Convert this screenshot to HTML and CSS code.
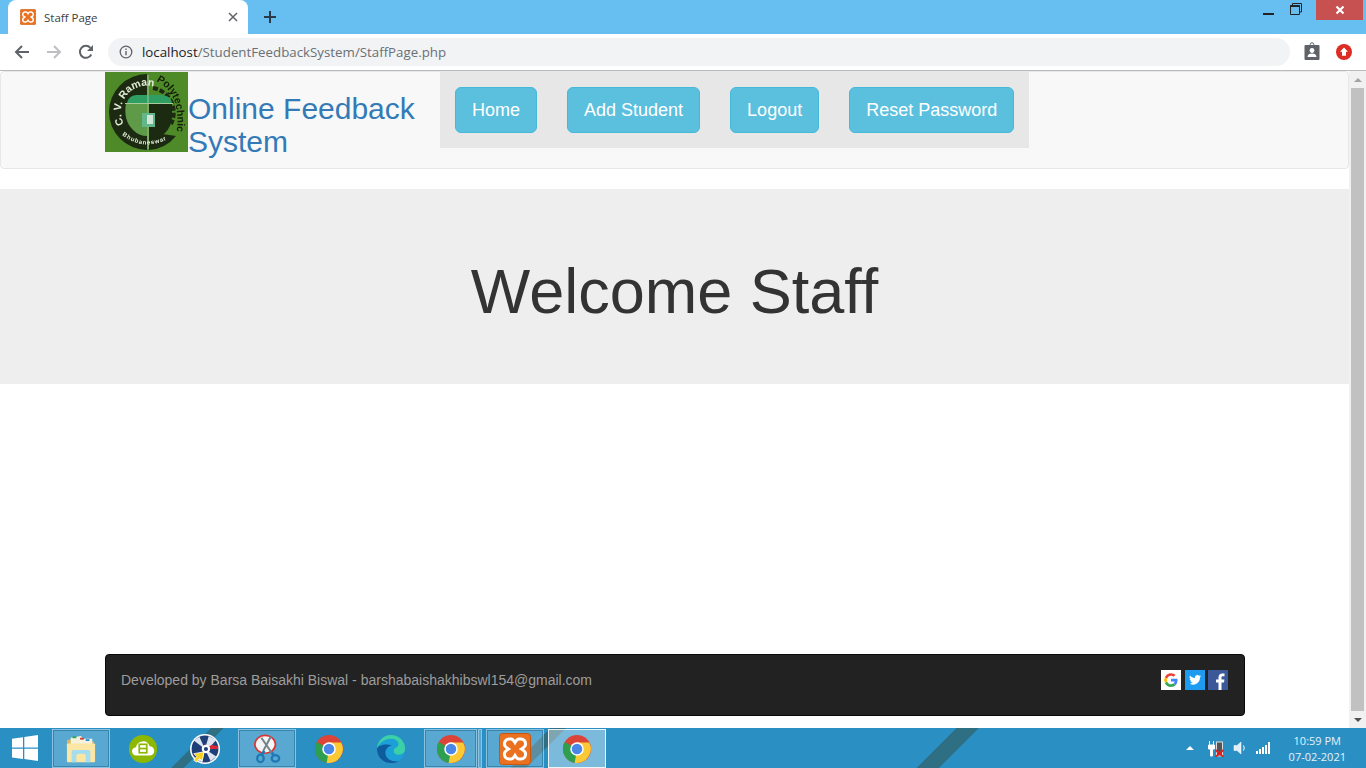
FILE: index.html
```html
<!DOCTYPE html>
<html lang="en">
<head>
<meta charset="utf-8">
<title>Staff Page</title>
<link rel="stylesheet" href="styles.css">
</head>
<body>
<svg class="defs" width="0" height="0">
  <symbol id="chrome" viewBox="0 0 32 32">
    <circle cx="16" cy="16" r="15" fill="#db4437"/>
    <path d="M16 16L3 8.500A15 15 0 0 0 13.500 30.800z" fill="#2e9e4f"/>
    <path d="M16 9H29A15 15 0 0 1 13.500 30.800L16 16z" fill="#fbc934"/>
    <circle cx="16" cy="16" r="7.200" fill="#fff"/>
    <circle cx="16" cy="16" r="5.600" fill="#4a86e8"/>
  </symbol>
  <symbol id="xampp" viewBox="0 0 32 32">
    <rect x=".5" y=".5" width="31" height="31" rx="3" fill="#ea7120" stroke="#c9560f"/>
    <path d="M10 6h2q2 0 4 3.500q2-3.500 4-3.500h2a4.500 4.500 0 0 1 4.500 4.500v1q0 2-4 4.500q4 2.500 4 4.500v1a4.500 4.500 0 0 1-4.500 4.500h-2q-2 0-4-3.500q-2 3.500-4 3.500h-2a4.500 4.500 0 0 1-4.500-4.500v-1q0-2 4-4.500q-4-2.500-4-4.500v-1a4.500 4.500 0 0 1 4.500-4.500z" fill="none" stroke="#fff" stroke-width="3"/>
  </symbol>
</svg>
<div class="tabstrip">
  <div class="tab">
    <svg class="favicon"><use href="#xampp"/></svg>
    <span class="tab-title">Staff Page</span>
    <svg class="tab-close" viewBox="0 0 10 10"><path d="M1 1l8 8M9 1l-8 8" stroke="#5f6368" stroke-width="1.500"/></svg>
  </div>
  <svg class="new-tab" viewBox="0 0 12 12"><path d="M6 0v12M0 6h12" stroke="#2b3a47" stroke-width="2"/></svg>
  <div class="window-controls">
    <svg class="win-min" viewBox="0 0 12 12"><path d="M0 9h11" stroke="#222" stroke-width="2"/></svg>
    <svg class="win-max" viewBox="0 0 12 12"><path d="M2.500 2.500V.5h9v8.500H9.500M.5 2.500h9v9h-9z" fill="none" stroke="#222" stroke-width="1"/><path d="M.5 3h9" stroke="#222" stroke-width="2"/></svg>
    <div class="win-close"><svg viewBox="0 0 10 10"><path d="M1.500 1.500l7 7M8.500 1.500l-7 7" stroke="#fff" stroke-width="2.200"/></svg></div>
  </div>
</div>
<div class="toolbar">
  <svg class="nav-icon" viewBox="0 0 16 16"><path d="M15 8H2M8 2L2 8l6 6" fill="none" stroke="#5f6368" stroke-width="2"/></svg>
  <svg class="nav-icon" viewBox="0 0 16 16"><path d="M1 8h13M8 2l6 6-6 6" fill="none" stroke="#bdbfc2" stroke-width="2"/></svg>
  <svg class="nav-icon" viewBox="0 0 16 16"><path d="M13.300 10.500A6 6 0 1 1 12.400 3.800" fill="none" stroke="#5f6368" stroke-width="2"/><path d="M15 1v6H9z" fill="#5f6368"/></svg>
  <div class="omnibox">
    <svg class="info" viewBox="0 0 14 14"><circle cx="7" cy="7" r="5.800" fill="none" stroke="#5f6368" stroke-width="1.300"/><path d="M7 6v4.200M7 3.600v1.400" stroke="#5f6368" stroke-width="1.400"/></svg>
    <span class="url"><span class="host">localhost</span>/StudentFeedbackSystem/StaffPage.php</span>
  </div>
  <svg class="ext-badge" viewBox="0 0 16 18"><path d="M1.500 2.500h13a1 1 0 0 1 1 1v13a1 1 0 0 1-1 1h-13a1 1 0 0 1-1-1v-13a1 1 0 0 1 1-1z" fill="#5f6368"/><circle cx="8" cy="2" r="1.800" fill="none" stroke="#5f6368"/><circle cx="8" cy="8" r="2.400" fill="#fff"/><path d="M3.500 14.500c0-2.500 2-3.500 4.500-3.500s4.500 1 4.500 3.500z" fill="#fff"/></svg>
  <svg class="ext-up" viewBox="0 0 16 16"><circle cx="8" cy="8" r="8" fill="#dc2c24"/><path d="M8 3.500l4 4.200H10v4H6v-4H4z" fill="#fff"/></svg>
</div>
<div class="viewport">
  <main class="page">
    <nav class="navbar">
      <div class="brand">
        <svg class="logo" viewBox="0 0 83 80">
          <rect width="83" height="80" fill="#4f8a28"/>
          <path d="M42 2A38 38 0 0 0 42 78z" fill="#1b2a10"/>
          <path d="M44 78A38 38 0 0 0 71 64L44 60z" fill="#1b2a10"/>
          <path d="M48 16A25 25 0 0 1 66 52" fill="none" stroke="#1b2a10" stroke-width="4" stroke-dasharray="5 2"/>
          <path d="M42 31H21Q18 48 28 58Q34 64 42 64z" fill="#5f9a48"/>
          <path d="M44 31H67V45A24 24 0 0 1 44 68z" fill="#1b2a10"/>
          <path d="M22 31Q24 23 32 23H58Q66 24 67 31z" fill="#2f9e63"/>
          <path d="M20 31.500H68" stroke="#a8c99a" stroke-width="1"/>
          <path d="M43 3V77" stroke="#a8c99a" stroke-width="1"/>
          <rect x="37" y="41" width="13" height="14" fill="#62b68a"/>
          <rect x="42" y="43" width="6" height="9" fill="#cfe6d8"/>
          <path id="logoArcLeft" d="M19 52A26 26 0 0 1 50 15" fill="none"/>
          <path id="logoArcRight" d="M51 9Q78 22 71 64" fill="none"/>
          <path id="logoArcBottom" d="M17 63Q42 82 69 63" fill="none"/>
          <text class="logo-text-light"><textPath href="#logoArcLeft">C. V. Raman</textPath></text>
          <text class="logo-text-dark"><textPath href="#logoArcRight">Polytechnic</textPath></text>
          <text class="logo-text-small"><textPath href="#logoArcBottom">Bhubaneswar</textPath></text>
        </svg>
        <a class="brand-title">Online Feedback System</a>
      </div>
      <div class="menu">
        <a class="btn">Home</a>
        <a class="btn">Add Student</a>
        <a class="btn">Logout</a>
        <a class="btn">Reset Password</a>
      </div>
    </nav>
    <section class="jumbotron"><h1>Welcome Staff</h1></section>
    <footer class="footer">
      <span class="footer-text">Developed by Barsa Baisakhi Biswal - barshabaishakhibswl154@gmail.com</span>
      <div class="social">
        <svg class="social-icon" viewBox="0 0 20 20"><rect width="20" height="20" fill="#fff"/><path d="M16.500 10.200c0-.5 0-1-.1-1.400H10v2.700h3.700c-.2.900-.7 1.600-1.400 2.100l2.200 1.700c1.300-1.200 2-3 2-5.100z" fill="#4285f4"/><path d="M10 17c1.900 0 3.400-.6 4.500-1.700l-2.200-1.700c-.6.400-1.400.7-2.300.7-1.800 0-3.300-1.200-3.800-2.900l-2.300 1.800C5 15.500 7.300 17 10 17z" fill="#34a853"/><path d="M6.200 11.400a4 4 0 0 1 0-2.700L3.900 6.900a7 7 0 0 0 0 6.300z" fill="#fbbc05"/><path d="M10 5.800c1 0 1.900.4 2.600 1l2-2A7 7 0 0 0 3.900 6.900l2.300 1.800C6.700 7 8.200 5.800 10 5.800z" fill="#ea4335"/></svg>
        <svg class="social-icon" viewBox="0 0 20 20"><rect width="20" height="20" fill="#1d9bf0"/><path d="M16 6.100c-.4.200-.9.300-1.400.4.500-.3.900-.8 1.100-1.400-.5.300-1 .5-1.600.6a2.500 2.500 0 0 0-4.200 2.300c-2-.1-3.800-1.100-5-2.600-.7 1.100-.3 2.600.8 3.300-.4 0-.8-.1-1.100-.3 0 1.200.8 2.200 2 2.500-.4.100-.7.100-1.100 0 .3 1 1.200 1.700 2.300 1.700-1 .8-2.300 1.200-3.600 1 1.100.7 2.400 1.100 3.800 1.100 4.600 0 7.100-3.800 7-7.200.4-.3.800-.8 1-1.400z" fill="#fff"/></svg>
        <svg class="social-icon" viewBox="0 0 20 20"><rect width="20" height="20" fill="#3b5998"/><path d="M13.500 20v-7.500H16l.4-3h-2.900V7.700c0-.9.300-1.400 1.500-1.400h1.500V3.600c-.3 0-1.200-.1-2.200-.1-2.200 0-3.800 1.300-3.800 3.800v2.200H8v3h2.500V20z" fill="#fff"/></svg>
      </div>
    </footer>
  </main>
  <div class="scrollbar">
    <div class="scroll-btn"><span class="arrow-up"></span></div>
    <div class="scroll-thumb"></div>
    <div class="scroll-btn"><span class="arrow-down"></span></div>
  </div>
</div>
<div class="taskbar">
  <svg class="start" viewBox="0 0 26 26"><path d="M0 3.700l11-1.500v10.300H0zM12.300 2L26 0v12.500H12.300zM0 13.800h11v10.300L0 22.500zM12.300 13.800H26V26l-13.700-2z" fill="#fff"/></svg>
  <div class="task active-soft">
    <svg class="task-icon" viewBox="0 0 32 32"><path d="M1 6h11l2 2h16v6H1z" fill="#d9b75c"/><path d="M5 4l11-2 2 3 10 0v6H5z" fill="#f6f1dc"/><rect x="7" y="2.500" width="4" height="2" fill="#2ba84a"/><rect x="15" y="4" width="4" height="2" fill="#d23a2e"/><rect x="21" y="5.500" width="4" height="2" fill="#2a8fd8"/><rect x="1" y="10" width="30" height="20" rx="1" fill="#fbe6a3"/><path d="M6 30V19q0-2 2-2h16q2 0 2 2v11h-5v-7q0-2-2-2h-6q-2 0-2 2v7z" fill="#a4dcf0"/></svg>
  </div>
  <div class="task">
    <svg class="task-icon" viewBox="0 0 32 32"><circle cx="16" cy="16" r="15" fill="#8db800"/><path d="M9 23a4.500 4.500 0 0 1-.5-9 7.500 7.500 0 0 1 14.500-1 5 5 0 0 1 0 10z" fill="#fff"/><rect x="12" y="11" width="8" height="9" fill="none" stroke="#8db800" stroke-width="1.800"/><path d="M12 15.500h8" stroke="#8db800" stroke-width="1.800"/></svg>
  </div>
  <div class="task">
    <svg class="task-icon" viewBox="0 0 32 32"><circle cx="16" cy="16" r="16" fill="#fff"/><circle cx="16" cy="16" r="14.300" fill="#1f3f78"/><path d="M16 10L30 13 30 16H20z" fill="#d8283a"/><path d="M16 16L20 2 28 6 24 11zM16 16L4 7 10 3zM16 16L22 29 28 24zM16 16L8 28 13 30z" fill="#dbe4ef"/><circle cx="17" cy="16" r="4.500" fill="#fff"/><circle cx="17" cy="16" r="2.200" fill="#1f3f78"/><path d="M15 19L4 21l3 3-3 4 3 2 3-4 3 3z" fill="#f7d21e" stroke="#fff" stroke-width=".8"/></svg>
  </div>
  <div class="task active-soft">
    <svg class="task-icon" viewBox="0 0 32 32"><ellipse cx="14" cy="11" rx="11" ry="9.500" fill="#f5f5f5" stroke="#d33" stroke-width="1.800"/><path d="M10 4l11 16M20 3l-8 15" stroke="#74848f" stroke-width="2.200"/><path d="M13 18l-3 5M21 20l2 2" stroke="#1f78b4" stroke-width="3"/><ellipse cx="9" cy="26" rx="3.500" ry="4" fill="none" stroke="#1f78b4" stroke-width="2.400"/><ellipse cx="25" cy="26" rx="4" ry="3.500" fill="none" stroke="#1f78b4" stroke-width="2.400"/></svg>
  </div>
  <div class="task"><svg class="task-icon"><use href="#chrome"/></svg></div>
  <div class="task">
    <svg class="task-icon" viewBox="0 0 32 32"><circle cx="16" cy="16" r="15" fill="#1d9fd8"/><path d="M16 1a15 15 0 0 1 15 15c0 3-2 6-7 6-4 0-5-2-5-4 0-4 5-3 5-7C24 7 20 5 16 5 9 5 3 10 1 15 2 7 8 1 16 1z" fill="#3bd0a5"/><path d="M1 16c0 8 6 15 15 15 4 0 6-1 8-2-8 1-14-3-14-9 0-4 3-7 7-8-7-2-15 0-16 4z" fill="#0f5c9c"/></svg>
  </div>
  <div class="task active-soft stacked"><svg class="task-icon"><use href="#chrome"/></svg></div>
  <div class="task active-soft stack-edge"></div>
  <div class="task active-soft"><svg class="task-icon xampp-icon"><use href="#xampp"/></svg></div>
  <div class="task active-strong"><svg class="task-icon"><use href="#chrome"/></svg></div>
  <div class="tray">
    <span class="tray-caret"></span>
    <svg class="tray-power" viewBox="0 0 16 18"><path d="M1 6h6v4H5v7H3v-7H1zM2 2v4M6 2v4" fill="#fff" stroke="#fff"/><rect x="9" y="3" width="6" height="14" fill="#555" stroke="#ddd"/><path d="M8 11l8 7M16 11l-8 7" stroke="#e02020" stroke-width="1.800"/></svg>
    <svg class="tray-sound" viewBox="0 0 14 14"><path d="M1 4.500h3L8 1v12L4 9.500H1z" fill="#dfeef7" stroke="#fff" stroke-width=".5"/><path d="M10.500 4.500q1.500 2.500 0 5" fill="none" stroke="#fff"/></svg>
    <svg class="tray-signal" viewBox="0 0 16 12"><path d="M1 9h2v3H1zM4 7h2v5H4zM7 5h2v7H7zM10 3h2v9h-2zM13 0h2v12h-2z" fill="#fff"/></svg>
    <div class="clock"><span>10:59 PM</span><span>07-02-2021</span></div>
  </div>
</div>
</body>
</html>
```
FILE: styles.css
```css
* { box-sizing: border-box; }
html, body { height: 100%; }
body {
  margin: 0;
  height: 768px;
  overflow: hidden;
  display: flex;
  flex-direction: column;
  font-family: "Liberation Sans", Arial, sans-serif;
  background: #fff;
}
.defs { display: block; height: 0; flex: none; }

/* Browser chrome */
.tabstrip {
  height: 34px;
  flex: none;
  background: #67bef1;
  display: flex;
  align-items: flex-end;
  padding-left: 8px;
}
.tab {
  width: 240px;
  height: 34px;
  background: #fff;
  border-radius: 8px 8px 0 0;
  display: flex;
  align-items: center;
  padding: 0 10px 0 12px;
}
.favicon { width: 16px; height: 16px; flex: none; }
.tab-title {
  margin-left: 8px;
  flex: 1;
  font-family: "Open Sans", sans-serif;
  font-size: 11.500px;
  color: #3c4043;
}
.tab-close { width: 10px; height: 10px; }
.new-tab { width: 12px; height: 12px; margin: 0 0 11px 16px; }
.window-controls {
  margin-left: auto;
  align-self: flex-start;
  display: flex;
  align-items: flex-start;
}
.win-min { width: 12px; height: 12px; margin: 5px 15px 0 0; }
.win-max { width: 12px; height: 12px; margin: 3px 14px 0 0; }
.win-close {
  width: 47px;
  height: 20px;
  margin-right: 3px;
  background: #c75050;
  display: flex;
  align-items: center;
  justify-content: center;
}
.win-close svg { width: 10px; height: 10px; }

.toolbar {
  height: 37px;
  flex: none;
  background: #fff;
  border-bottom: 1px solid #b8babc;
  display: flex;
  align-items: center;
  padding: 0 14px 1px 14px;
}
.nav-icon { width: 16px; height: 16px; margin-right: 16px; flex: none; }
.omnibox {
  width: 1182px;
  height: 28px;
  margin-left: -2px;
  border-radius: 14px;
  background: #f1f3f4;
  display: flex;
  align-items: center;
  padding-left: 11px;
}
.info { width: 14px; height: 14px; flex: none; }
.url {
  margin-left: 9px;
  font-family: "Open Sans", sans-serif;
  font-size: 13.300px;
  color: #6b7075;
  white-space: nowrap;
}
.host { color: #202124; }
.ext-badge { width: 16px; height: 19px; margin-left: 14px; flex: none; }
.ext-up { width: 16px; height: 16px; margin-left: 16px; flex: none; }

/* Page */
.viewport {
  height: 657px;
  flex: none;
  display: flex;
}
.page {
  flex: 1;
  display: flex;
  flex-direction: column;
  min-width: 0;
}
.navbar {
  height: 98px;
  flex: none;
  background: #f8f8f8;
  border: 1px solid #e7e7e7;
  border-radius: 4px;
  display: flex;
  align-items: flex-start;
  padding-left: 104px;
}
.brand { width: 335px; display: flex; flex: none; }
.logo { width: 83px; height: 80px; flex: none; filter: blur(.35px); }
.logo text { font-family: "Liberation Sans", Arial, sans-serif; font-weight: 700; }
.logo-text-light { font-size: 10.500px; fill: #e3ecd9; }
.logo-text-dark { font-size: 10.500px; fill: #14200c; }
.logo-text-small { font-size: 6px; letter-spacing: .8px; fill: #e6efe0; }
.brand-title {
  width: 240px;
  margin: 20px 0 0 0;
  font-size: 30px;
  line-height: 33px;
  color: #337ab7;
}
.menu {
  height: 76px;
  background: #e7e7e7;
  display: flex;
  gap: 30px;
  padding: 15px 15px 0;
}
.btn {
  height: 46px;
  padding: 0 16px;
  display: flex;
  align-items: center;
  background: #5bc0de;
  border: 1px solid #46b8da;
  border-radius: 6px;
  color: #fff;
  font-size: 18px;
  white-space: nowrap;
}
.jumbotron {
  height: 195px;
  flex: none;
  margin-top: 20px;
  padding-top: 10px;
  background: #eee;
  display: flex;
  align-items: center;
  justify-content: center;
}
.jumbotron h1 {
  margin: 0;
  font-size: 63px;
  font-weight: 500;
  line-height: 69px;
  color: #333;
}
.footer {
  width: 1140px;
  height: 62px;
  flex: none;
  margin: 270px 0 0 105px;
  background: #222;
  border: 1px solid #080808;
  border-radius: 4px;
  display: flex;
  justify-content: space-between;
  align-items: flex-start;
  padding: 15px 16px 0 15px;
}
.footer-text { font-size: 14px; line-height: 20px; color: #9d9d9d; }
.social { display: flex; gap: 3px; }
.social-icon { width: 20px; height: 20px; display: block; }
.social-icon:first-child { margin-right: 1px; }

/* Scrollbar */
.scrollbar {
  width: 17px;
  flex: none;
  background: #f1f1f1;
  display: flex;
  flex-direction: column;
}
.scroll-btn {
  height: 17px;
  flex: none;
  display: flex;
  align-items: center;
  justify-content: center;
}
.scroll-thumb { flex: 1; margin: 0 2px; background: #c1c1c1; }
.arrow-up, .arrow-down {
  width: 0;
  height: 0;
  border-left: 4px solid transparent;
  border-right: 4px solid transparent;
}
.arrow-up { border-bottom: 4px solid #a3a3a3; }
.arrow-down { border-top: 4px solid #505050; }

/* Taskbar */
.taskbar {
  height: 40px;
  flex: none;
  background-color: #2a90c4;
  background-image: linear-gradient(135deg,
    transparent 149px, #2f6f84 149.500px, #2f6f84 158px, transparent 158.500px,
    transparent 389px, #2f6f84 389.500px, #2f6f84 400px, transparent 400.500px,
    transparent 676px, #2f6f84 676.500px, #2f6f84 692px, transparent 692.500px);
  display: flex;
  align-items: stretch;
  padding-left: 12px;
}
.start { width: 26px; height: 26px; align-self: center; margin-right: 14px; flex: none; }
.task {
  width: 58px;
  height: 39px;
  margin-right: 4px;
  align-self: flex-end;
  display: flex;
  align-items: center;
  justify-content: center;
  flex: none;
}
.active-soft {
  background: rgba(255, 255, 255, .22);
  border: 1px solid rgba(255, 255, 255, .3);
  outline: 1px solid rgba(20, 90, 130, .45);
  outline-offset: -2px;
}
.active-strong {
  background: rgba(255, 255, 255, .38);
  border: 1px solid rgba(255, 255, 255, .85);
}
.stacked { width: 53px; margin-right: 1px; }
.stack-edge { width: 4px; outline: 0; }
.task-icon { width: 30px; height: 30px; display: block; }
.xampp-icon { width: 32px; height: 32px; }
.tray {
  margin-left: auto;
  display: flex;
  align-items: center;
  padding-right: 20px;
}
.tray-caret {
  width: 0;
  height: 0;
  border-left: 4px solid transparent;
  border-right: 4px solid transparent;
  border-bottom: 4px solid #fff;
  margin-right: 13px;
}
.tray-power { width: 17px; height: 18px; margin-right: 9px; }
.tray-sound { width: 14px; height: 14px; margin-right: 8px; }
.tray-signal { width: 16px; height: 12px; margin-right: 18px; }
.clock {
  display: flex;
  flex-direction: column;
  align-items: center;
  padding-top: 2px;
  font-family: "Open Sans", sans-serif;
  font-size: 11px;
  line-height: 16px;
  color: #e6f2f9;
}
```
